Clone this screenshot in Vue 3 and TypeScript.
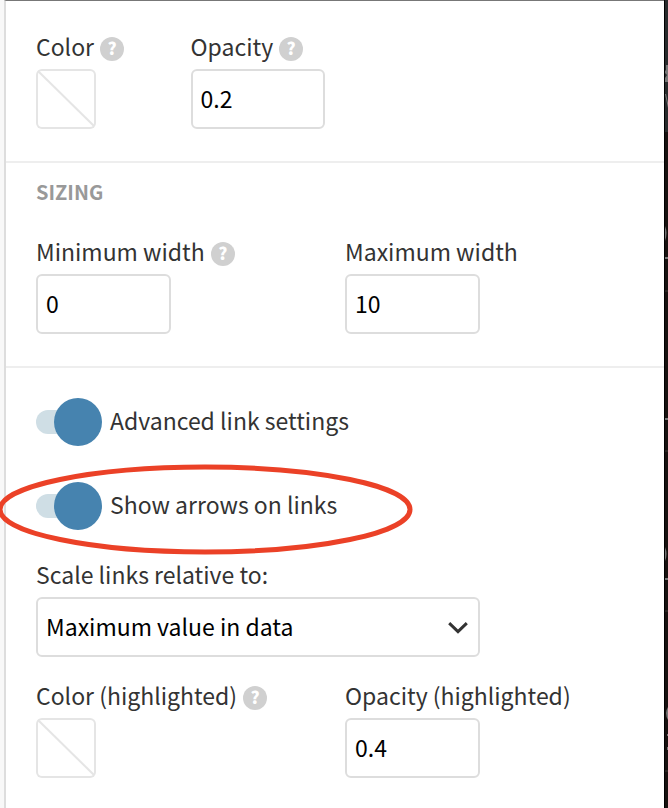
<script setup lang="ts">
import { ref } from 'vue'

const opacity = ref('0.2')
const minWidth = ref('0')
const maxWidth = ref('10')
const advanced = ref(true)
const arrows = ref(true)
const scale = ref('max')
const opacityHighlighted = ref('0.4')
</script>

<template>
  <div class="page">
    <main class="panel">
      <section class="section first">
        <div class="fields">
          <div class="field">
            <div class="label-row">
              <label for="color">Color</label>
              <button type="button" class="help">?</button>
            </div>
            <button id="color" type="button" class="swatch">
              <svg viewBox="0 0 60 60"><path d="M2 2 L58 57" /></svg>
            </button>
          </div>
          <div class="field">
            <div class="label-row">
              <label for="opacity">Opacity</label>
              <button type="button" class="help">?</button>
            </div>
            <input id="opacity" v-model="opacity" class="box" type="text" />
          </div>
        </div>
      </section>

      <section class="section sizing">
        <h2>Sizing</h2>
        <div class="fields">
          <div class="field half">
            <div class="label-row">
              <label for="min-width">Minimum width</label>
              <button type="button" class="help">?</button>
            </div>
            <input id="min-width" v-model="minWidth" class="box" type="text" />
          </div>
          <div class="field half">
            <div class="label-row">
              <label for="max-width">Maximum width</label>
            </div>
            <input id="max-width" v-model="maxWidth" class="box" type="text" />
          </div>
        </div>
      </section>

      <section class="section links">
        <div class="toggle">
          <input id="advanced" v-model="advanced" type="checkbox" />
          <label for="advanced">Advanced link settings</label>
        </div>
        <div class="toggle arrows">
          <input id="arrows" v-model="arrows" type="checkbox" />
          <label for="arrows">Show arrows on links</label>
          <svg class="ring" width="416" height="92" viewBox="0 0 416 92">
            <ellipse cx="207" cy="46.5" rx="205" ry="42.5" />
          </svg>
        </div>
        <div class="fields">
          <div class="field wide">
            <div class="label-row">
              <label for="scale">Scale links relative to:</label>
            </div>
            <div class="select">
              <select id="scale" v-model="scale" class="box">
                <option value="max">Maximum value in data</option>
              </select>
              <svg class="chevron" width="20" height="12" viewBox="0 0 20 12">
                <path d="M1.2 1.2 L10 9.6 L18.8 1.2" />
              </svg>
            </div>
          </div>
        </div>
        <div class="fields last">
          <div class="field half">
            <div class="label-row">
              <label for="color-hl">Color (highlighted)</label>
              <button type="button" class="help">?</button>
            </div>
            <button id="color-hl" type="button" class="swatch">
              <svg viewBox="0 0 60 60"><path d="M2 2 L58 57" /></svg>
            </button>
          </div>
          <div class="field half">
            <div class="label-row">
              <label for="opacity-hl">Opacity (highlighted)</label>
            </div>
            <input id="opacity-hl" v-model="opacityHighlighted" class="box" type="text" />
          </div>
        </div>
      </section>
    </main>

    <aside class="preview">
      <svg width="4" height="808" viewBox="0 0 4 808">
        <rect x="1" width="3" height="132" fill="#282b2c" />
        <g fill="#777">
          <path d="M2 65h2v17h-3v-4l2-3-2-2v-2l1-1z" />
          <path d="M1 94h1l2 9v5z" />
          <path d="M1 226q3 7 0 15z" />
          <path d="M1 257h3v2h-3zM1 418h3v2h-3zM1 578h3v2h-3z" />
          <path d="M1 547q3 7 0 14z" />
          <path d="M4 707q-4 6 0 13zM3 734h1v2h-1zM3 747h1v3h-1z" />
        </g>
        <path d="M1 290h3v2h-3zM1 450h3v2h-3zM1 610h3v2h-3zM1 770h3v2h-3z" fill="#2a2422" />
      </svg>
    </aside>
  </div>
</template>

<style>
body {
  margin: 0;
  background: #f8f8f8;
}
</style>

<style scoped>
.page {
  box-sizing: border-box;
  display: grid;
  grid-template-columns: minmax(0, 1fr) 4px;
  min-height: 100vh;
  padding-left: 4px;
  overflow: hidden;
  color: #333;
  font-family: "Noto Sans CJK SC", "Noto Sans", sans-serif;
  font-size: 23px;
  line-height: 28px;
}
.panel {
  border-left: 2px solid #ddd;
  border-top: 1px solid #777;
  background: #fff;
}
.section {
  padding: 30px 10px 32px 30px;
  border-bottom: 2px solid #eee;
}
.section.first {
  padding-top: 31px;
}
.section.sizing {
  padding-top: 17px;
}
.section.links {
  padding-bottom: 29px;
  border-bottom: 0;
}
h2 {
  margin: 0 0 33px;
  color: #999;
  font-size: 20px;
  font-weight: 700;
  line-height: 24px;
  text-transform: uppercase;
}
label {
  padding-bottom: 4px;
}
.fields {
  display: flex;
}
.field {
  box-sizing: border-box;
  flex: 0 0 25%;
  padding-right: 20px;
}
.field.half {
  flex-basis: 50%;
}
.field.wide {
  flex-basis: 75%;
}
.field.half .box {
  width: calc(50% - 10px);
}
.label-row {
  display: flex;
  align-items: center;
  gap: 6px;
  margin-bottom: 5px;
  white-space: nowrap;
}
.help {
  flex: none;
  width: 24px;
  height: 24px;
  margin: 2px 0 0;
  padding: 0 0 2px;
  border: 0;
  border-radius: 50%;
  background: #d0d0d0;
  color: #fff;
  font: 900 17px/22px "Noto Sans CJK SC", sans-serif;
}
.box {
  box-sizing: border-box;
  display: block;
  width: 100%;
  height: 60px;
  padding: 0 8px 2px;
  border: 2px solid #ddd;
  border-radius: 6px;
  outline: 0;
  background: #fff;
  color: #000;
  font: inherit;
}
.swatch {
  display: block;
  width: 60px;
  height: 60px;
  padding: 0;
  border: 0;
  border-radius: 6px;
  background: #fff;
  box-shadow: inset 0 0 0 2px #e5e5e5;
}
.swatch svg {
  display: block;
}
.swatch path {
  stroke: #e5e5e5;
  stroke-width: 2;
}
.select {
  position: relative;
}
.select .box {
  appearance: none;
}
.chevron {
  position: absolute;
  top: 25px;
  right: 12px;
  pointer-events: none;
}
.chevron path {
  fill: none;
  stroke: #333;
  stroke-width: 3;
}
.toggle {
  display: flex;
  align-items: center;
  gap: 8px;
  margin-bottom: 36px;
}
.toggle.arrows {
  position: relative;
  margin-bottom: 30px;
}
.toggle input {
  appearance: none;
  display: flex;
  align-items: center;
  width: 66px;
  height: 48px;
  margin: 0;
}
.toggle input::before {
  content: "";
  width: 48px;
  height: 24px;
  border-radius: 12px;
  background: #cfdee5;
}
.toggle input::after {
  content: "";
  width: 48px;
  height: 48px;
  margin-left: -48px;
  border-radius: 50%;
  background: #999;
}
.toggle input:checked::after {
  margin-left: -30px;
  background: #4683af;
}
.ring {
  position: absolute;
  top: -19px;
  left: -38px;
  pointer-events: none;
}
.ring ellipse {
  fill: none;
  stroke: #eb4127;
  stroke-width: 5;
}
.fields.last {
  margin-top: 24px;
}
.preview {
  overflow: hidden;
  background: linear-gradient(90deg, #000 1px, #17110f 1px);
}
.preview svg {
  display: block;
}
</style>
